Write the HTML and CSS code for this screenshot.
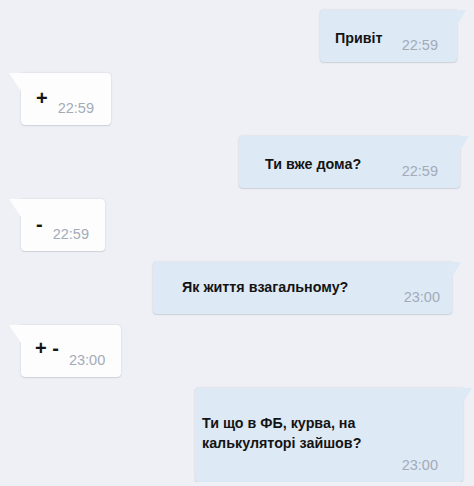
FILE: index.html
```html
<!DOCTYPE html>
<html lang="uk">
<head>
<meta charset="utf-8">
<title>Чат</title>
<link rel="stylesheet" href="styles.css">
</head>
<body>
<div class="chat">
  <div class="msg out b1">
    <span class="text">Привіт</span>
    <span class="time">22:59</span>
  </div>
  <div class="msg in b2">
    <span class="text big">+</span>
    <span class="time">22:59</span>
  </div>
  <div class="msg out b3">
    <span class="text">Ти вже дома?</span>
    <span class="time">22:59</span>
  </div>
  <div class="msg in b4">
    <span class="text big">-</span>
    <span class="time">22:59</span>
  </div>
  <div class="msg out b5">
    <span class="text">Як життя взагальному?</span>
    <span class="time">23:00</span>
  </div>
  <div class="msg in b6">
    <span class="text big">+ -</span>
    <span class="time">23:00</span>
  </div>
  <div class="msg out tall b7">
    <span class="text">Ти що в ФБ, курва, на<br>калькуляторі зайшов?</span>
    <span class="time">23:00</span>
  </div>
</div>
</body>
</html>
```
FILE: styles.css
```css
html, body {
  margin: 0;
  padding: 0;
  background: #eff0f6;
}

body {
  font-family: "Liberation Sans", Arial, sans-serif;
  overflow: hidden;
}

.chat {
  display: flex;
  flex-direction: column;
  gap: 11px;
  padding-top: 10px;
}

.msg {
  position: relative;
  box-sizing: border-box;
  height: 52px;
  display: flex;
  align-items: flex-start;
  padding-top: 18px;
  border-radius: 4px;
  box-shadow: 0 0 2px rgba(90, 100, 120, 0.25), 0 1px 1px rgba(90, 100, 120, 0.15);
}

.msg::before {
  content: "";
  position: absolute;
  top: 0;
}

.out {
  align-self: flex-end;
  background: #dde9f5;
  border-top-right-radius: 0;
}

.out::before {
  right: -9px;
  width: 9px;
  height: 15px;
  background: #dde9f5;
  clip-path: polygon(0 0, 100% 0, 0 100%);
}

.in {
  align-self: flex-start;
  background: #fdfdfd;
  border-top-left-radius: 0;
  margin-left: 21px;
  padding-left: 15px;
  padding-right: 15px;
}

.in::before {
  left: -12px;
  width: 12px;
  height: 18px;
  background: #fdfdfd;
  clip-path: polygon(0 0, 100% 0, 100% 100%);
}

.text {
  font-weight: bold;
  font-size: 14.3px;
  line-height: 20px;
  color: #141414;
}

.text.big {
  font-size: 20px;
  margin-top: -3px;
  white-space: nowrap;
  flex-shrink: 0;
}

.time {
  font-size: 14.5px;
  line-height: 20px;
  color: #a3abb9;
  margin-top: 7px;
  white-space: nowrap;
  flex-shrink: 0;
}

.out .time {
  margin-left: auto;
}

.in .time {
  margin-left: 10px;
}

.b1 { width: 137px; margin-right: 17px; padding-left: 15px; padding-right: 19px; }
.b3 { width: 221px; margin-right: 14px; padding-left: 26px; padding-right: 22px; }
.b5 { width: 299px; margin-right: 22px; padding-left: 29px; padding-right: 12px; padding-top: 15px; }
.b5 .time { margin-top: 10px; }
.b7 { width: 268px; margin-right: 11px; padding-left: 7px; padding-right: 25px; }

.b2 { width: 90px; }
.b4 { width: 84px; }
.b6 { width: 100px; padding-left: 14px; }
.b6 .text.big { margin-top: -5px; }

.tall {
  height: 94px;
  flex-direction: column;
  padding-top: 25px;
}

.tall .time {
  align-self: flex-end;
  margin-top: 2px;
}
```
